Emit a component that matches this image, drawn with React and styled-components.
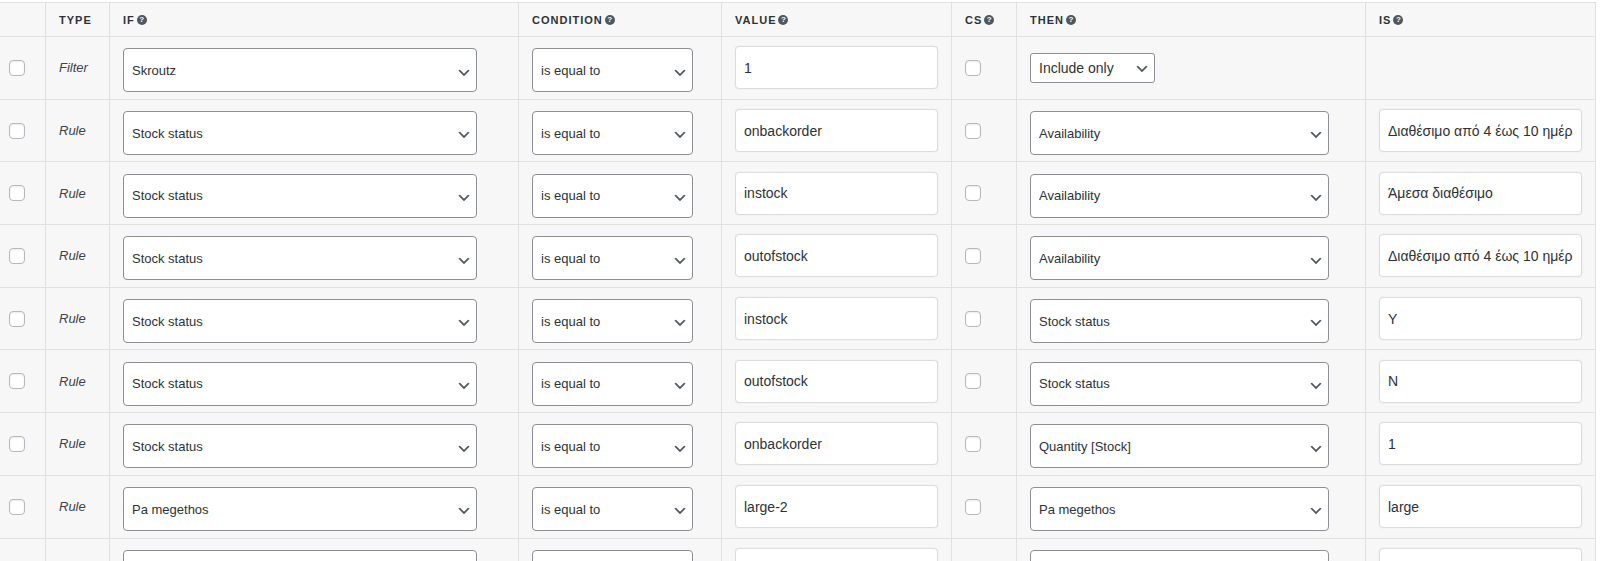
import React from "react";
import styled, { createGlobalStyle } from "styled-components";

const GlobalStyle = createGlobalStyle`
  html, body {
    margin: 0;
    padding: 0;
    background: #ffffff;
    font-family: "Liberation Sans", Arial, sans-serif;
    color: #2c3338;
  }
`;

const COLUMNS = "46px 64px 409px 203px 230px 65px 349px 230px";

const Page = styled.div`
  padding-top: 2px;
`;

const Table = styled.div`
  width: 1596px;
  border-top: 1px solid #e1e1e1;
  background: #f7f7f7;
`;

const Row = styled.div`
  display: grid;
  grid-template-columns: ${COLUMNS};
  height: ${(p) => (p.$head ? "34px" : "62.7px")};
  box-sizing: border-box;
  border-bottom: 1px solid #e1e1e1;
`;

const Cell = styled.div`
  display: flex;
  align-items: center;
  box-sizing: border-box;
  min-width: 0;
  padding: 0 13px 0 ${(p) => (p.$first ? "9px" : "13px")};
  border-right: 1px solid #e1e1e1;
`;

const HeadLabel = styled.span`
  display: inline-flex;
  align-items: center;
  font-size: 11px;
  font-weight: 700;
  letter-spacing: 1px;
  text-transform: uppercase;
  color: #2c3338;
`;

const Help = styled.span`
  display: inline-flex;
  align-items: center;
  justify-content: center;
  width: 10px;
  height: 10px;
  margin-left: 2px;
  border-radius: 50%;
  background: #50575e;
  color: #ffffff;
  font-size: 8px;
  font-weight: 700;
  line-height: 1;
  letter-spacing: 0;
`;

const TypeText = styled.span`
  font-size: 13px;
  font-style: italic;
  color: #3c434a;
`;

const Check = styled.input.attrs({ type: "checkbox" })`
  appearance: none;
  width: 16px;
  height: 16px;
  margin: 0;
  box-sizing: border-box;
  border: 1px solid #b4b9be;
  border-radius: 4px;
  background: #ffffff;
  box-shadow: inset 0 1px 2px rgba(0, 0, 0, 0.08);
`;

const SelectWrap = styled.div`
  position: relative;
  width: ${(p) => p.$w}px;
  height: ${(p) => p.$h}px;
  margin-top: ${(p) => (p.$small ? "0" : "5px")};
  flex: none;
`;

const NativeSelect = styled.select`
  appearance: none;
  width: 100%;
  height: 100%;
  margin: 0;
  box-sizing: border-box;
  padding: 0 24px 0 8px;
  border: 1px solid #8c8f94;
  border-radius: ${(p) => (p.$small ? "3px" : "4px")};
  background: #ffffff;
  color: #2c3338;
  font-family: "Liberation Sans", Arial, sans-serif;
  font-size: ${(p) => (p.$small ? "14px" : "13px")};
  outline: none;
`;

const Chevron = styled.svg`
  position: absolute;
  right: 5px;
  top: 55%;
  width: 16px;
  height: 16px;
  transform: translateY(-50%);
  pointer-events: none;
`;

const TextInput = styled.input.attrs({ type: "text" })`
  width: 100%;
  height: 43px;
  margin: 0;
  box-sizing: border-box;
  padding: 0 8px;
  border: 1px solid #dcdcde;
  border-radius: 4px;
  background: #ffffff;
  color: #2c3338;
  font-family: "Liberation Sans", Arial, sans-serif;
  font-size: 14px;
  box-shadow: 0 0 2px rgba(0, 0, 0, 0.07);
  outline: none;
`;

function Select({ value, width, small }) {
  return (
    <SelectWrap $w={width} $h={small ? 30 : 44} $small={small}>
      <NativeSelect $small={small} defaultValue={value}>
        <option value={value}>{value}</option>
      </NativeSelect>
      <Chevron viewBox="0 0 20 20" aria-hidden="true">
        <path d="M5 6l5 5 5-5 2 1-7 7-7-7 2-1z" fill="#50575e" />
      </Chevron>
    </SelectWrap>
  );
}

function HeadCell({ label, help }) {
  return (
    <Cell>
      {label && (
        <HeadLabel>
          {label}
          {help && <Help>?</Help>}
        </HeadLabel>
      )}
    </Cell>
  );
}

const rules = [
  { type: "Filter", field: "Skroutz", cond: "is equal to", value: "1", then: "Include only", is: null },
  { type: "Rule", field: "Stock status", cond: "is equal to", value: "onbackorder", then: "Availability", is: "Διαθέσιμο από 4 έως 10 ημέρες" },
  { type: "Rule", field: "Stock status", cond: "is equal to", value: "instock", then: "Availability", is: "Άμεσα διαθέσιμο" },
  { type: "Rule", field: "Stock status", cond: "is equal to", value: "outofstock", then: "Availability", is: "Διαθέσιμο από 4 έως 10 ημέρες" },
  { type: "Rule", field: "Stock status", cond: "is equal to", value: "instock", then: "Stock status", is: "Y" },
  { type: "Rule", field: "Stock status", cond: "is equal to", value: "outofstock", then: "Stock status", is: "N" },
  { type: "Rule", field: "Stock status", cond: "is equal to", value: "onbackorder", then: "Quantity [Stock]", is: "1" },
  { type: "Rule", field: "Pa megethos", cond: "is equal to", value: "large-2", then: "Pa megethos", is: "large" },
  // blank row, waiting to be filled in
  { type: "", field: "", cond: "", value: "", then: "", is: "" },
];

export default function App() {
  return (
    <Page>
      <GlobalStyle />
      <Table>
        <Row $head>
          <HeadCell />
          <HeadCell label="Type" />
          <HeadCell label="If" help />
          <HeadCell label="Condition" help />
          <HeadCell label="Value" help />
          <HeadCell label="CS" help />
          <HeadCell label="Then" help />
          <HeadCell label="Is" help />
        </Row>
        {rules.map((r, i) => (
          <Row key={i}>
            <Cell $first>
              <Check />
            </Cell>
            <Cell>{r.type && <TypeText>{r.type}</TypeText>}</Cell>
            <Cell>
              <Select value={r.field} width={354} />
            </Cell>
            <Cell>
              <Select value={r.cond} width={161} />
            </Cell>
            <Cell>
              <TextInput defaultValue={r.value} />
            </Cell>
            <Cell>
              <Check />
            </Cell>
            <Cell>
              {r.type === "Filter" ? (
                <Select value={r.then} width={125} small />
              ) : (
                <Select value={r.then} width={299} />
              )}
            </Cell>
            <Cell>{r.is !== null && <TextInput defaultValue={r.is} />}</Cell>
          </Row>
        ))}
      </Table>
    </Page>
  );
}
